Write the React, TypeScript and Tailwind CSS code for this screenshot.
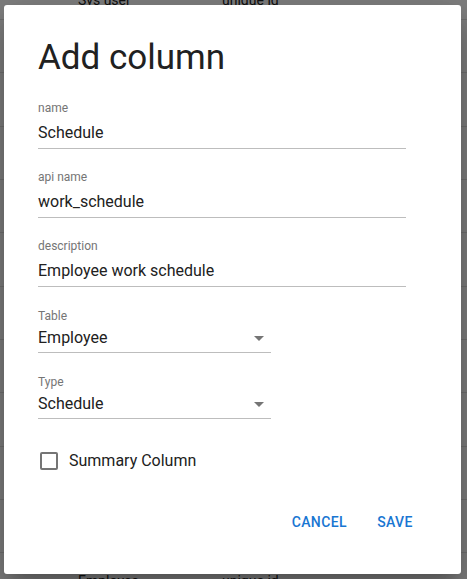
import React from "react";

function TextField({ label, value }: { label: string; value: string }) {
  return (
    <div className="w-[368px]">
      <div className="text-[12px] leading-[16px] text-[#757575]">{label}</div>
      <div className="mt-[5px] text-[16px] leading-[24px] text-[#212121] pb-[3px] border-b border-[#bdbdbd]">
        {value}
      </div>
    </div>
  );
}

function SelectField({ label, value }: { label: string; value: string }) {
  return (
    <div className="w-[233px]">
      <div className="text-[12px] leading-[16px] text-[#757575]">{label}</div>
      <div className="mt-[1.5px] flex items-center justify-between text-[16px] leading-[24px] text-[#212121] pb-[2px] border-b border-[#bdbdbd]">
        <span>{value}</span>
        <svg width="10" height="5" viewBox="0 0 10 5" className="mr-[7px] mt-[2px]">
          <path d="M0 0 L10 0 L5 5 Z" fill="#757575" />
        </svg>
      </div>
    </div>
  );
}

export default function App() {
  return (
    <div
      className="relative w-[467px] h-[579px] overflow-hidden bg-white"
      style={{ fontFamily: "Roboto, 'Liberation Sans', sans-serif" }}
    >
      {/* background table */}
      <div className="flex flex-col text-[14px] leading-[20px] text-[#222]">
        <div className="h-[30px] border-b border-[#e0e0e0] flex -mt-[10px] pt-0">
          <span className="ml-[78px] w-[144px]">Sys user</span>
          <span>unique id</span>
        </div>
        {Array.from({ length: 10 }).map((_, i) => (
          <div key={i} className="h-[53.33px] border-b border-[#e0e0e0]" />
        ))}
        <div className="h-[53.33px] flex pt-[18px]">
          <span className="ml-[78px] w-[144px]">Employee</span>
          <span>unique id</span>
        </div>
      </div>

      {/* overlay */}
      <div className="absolute inset-0 bg-black/50" />

      {/* dialog */}
      <div className="absolute left-[4px] top-[5px] w-[457px] h-[569px] bg-white rounded-[3px] shadow-[0_11px_15px_-7px_rgba(0,0,0,0.2),0_24px_38px_3px_rgba(0,0,0,0.14),0_9px_46px_8px_rgba(0,0,0,0.12)] flex flex-col pl-[34px] pt-[33px]">
        <h1 className="text-[35px] leading-[40px] text-[#212121] font-normal">Add column</h1>

        <div className="mt-[22px] flex flex-col">
          <TextField label="name" value="Schedule" />
          <div className="h-[20px]" />
          <TextField label="api name" value="work_schedule" />
          <div className="h-[20px]" />
          <TextField label="description" value="Employee work schedule" />
          <div className="h-[21px]" />
          <SelectField label="Table" value="Employee" />
          <div className="h-[21.5px]" />
          <SelectField label="Type" value="Schedule" />
        </div>

        <label className="mt-[30px] flex items-center">
          <span className="ml-[1.5px] w-[18px] h-[18px] border-2 border-[#757575] rounded-[2px] box-border" />
          <span className="ml-[11.5px] text-[16px] leading-[24px] text-[#212121]">Summary Column</span>
        </label>

        <div className="mt-[31px] flex justify-end pr-[34px] gap-[8px]">
          <button className="min-w-[64px] px-[8px] py-[6px] text-[14px] leading-[24px] font-medium tracking-[0.4px] text-[#1976d2] uppercase">
            Cancel
          </button>
          <button className="min-w-[64px] px-[8px] py-[6px] text-[14px] leading-[24px] font-medium tracking-[0.4px] text-[#1976d2] uppercase">
            Save
          </button>
        </div>
      </div>
    </div>
  );
}
